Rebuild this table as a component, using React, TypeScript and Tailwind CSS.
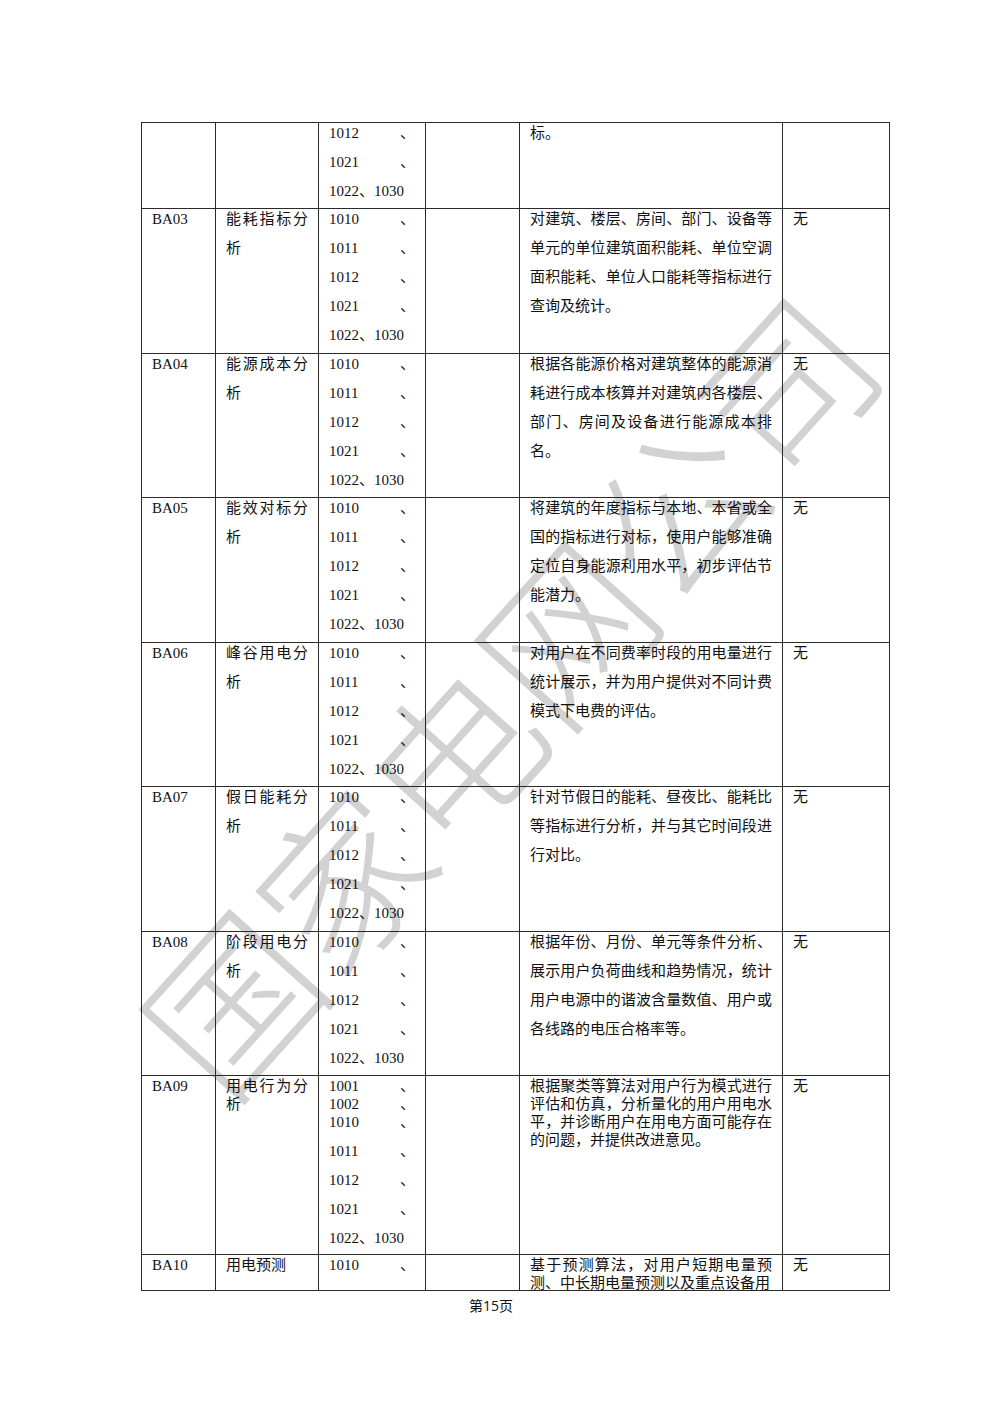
import React from 'react';

type Row = {
  id: string;
  name: string[];
  codes: string[];
  desc: string[];
  note: string;
  height: string;
  // line heights in px for the code column; default 29
  codeLines?: number[];
  tight?: boolean;
};

const C = ['1010、', '1011、', '1012、', '1021、', '1022、1030'];

const rows: Row[] = [
  {
    id: '',
    name: [],
    codes: ['1012、', '1021、', '1022、1030'],
    desc: ['标。'],
    note: '',
    height: 'h-[86px]',
  },
  {
    id: 'BA03',
    name: ['能耗指标分', '析'],
    codes: C,
    desc: ['对建筑、楼层、房间、部门、设备等', '单元的单位建筑面积能耗、单位空调', '面积能耗、单位人口能耗等指标进行', '查询及统计。'],
    note: '无',
    height: 'h-[145px]',
  },
  {
    id: 'BA04',
    name: ['能源成本分', '析'],
    codes: C,
    desc: ['根据各能源价格对建筑整体的能源消', '耗进行成本核算并对建筑内各楼层、', '部门、房间及设备进行能源成本排', '名。'],
    note: '无',
    height: 'h-[144px]',
  },
  {
    id: 'BA05',
    name: ['能效对标分', '析'],
    codes: C,
    desc: ['将建筑的年度指标与本地、本省或全', '国的指标进行对标，使用户能够准确', '定位自身能源利用水平，初步评估节', '能潜力。'],
    note: '无',
    height: 'h-[145px]',
  },
  {
    id: 'BA06',
    name: ['峰谷用电分', '析'],
    codes: C,
    desc: ['对用户在不同费率时段的用电量进行', '统计展示，并为用户提供对不同计费', '模式下电费的评估。'],
    note: '无',
    height: 'h-[144px]',
  },
  {
    id: 'BA07',
    name: ['假日能耗分', '析'],
    codes: C,
    desc: ['针对节假日的能耗、昼夜比、能耗比', '等指标进行分析，并与其它时间段进', '行对比。'],
    note: '无',
    height: 'h-[145px]',
  },
  {
    id: 'BA08',
    name: ['阶段用电分', '析'],
    codes: C,
    desc: ['根据年份、月份、单元等条件分析、', '展示用户负荷曲线和趋势情况，统计', '用户电源中的谐波含量数值、用户或', '各线路的电压合格率等。'],
    note: '无',
    height: 'h-[144px]',
  },
  {
    id: 'BA09',
    name: ['用电行为分', '析'],
    codes: ['1001、', '1002、', '1010、', '1011、', '1012、', '1021、', '1022、1030'],
    codeLines: [18, 18, 29, 29, 29, 29, 29],
    desc: ['根据聚类等算法对用户行为模式进行', '评估和仿真，分析量化的用户用电水', '平，并诊断用户在用电方面可能存在', '的问题，并提供改进意见。'],
    note: '无',
    height: 'h-[179px]',
    tight: true,
  },
  {
    id: 'BA10',
    name: ['用电预测'],
    codes: ['1010、'],
    desc: ['基于预测算法，对用户短期电量预', '测、中长期电量预测以及重点设备用'],
    note: '无',
    height: 'h-[36px]',
    tight: true,
  },
];

const Line = ({ h, justify, children }: { h: number; justify?: boolean; children: React.ReactNode }) => (
  <div
    className={`leading-[20px] whitespace-nowrap ${justify ? 'text-justify [text-align-last:justify]' : ''}`}
    style={{ height: h }}
  >
    {children}
  </div>
);

const CodeLine = ({ text, h }: { text: string; h: number }) => {
  // a single code with trailing 、 is spread to both edges, as Word justifies it
  const single = /^\d{4}、$/.test(text);
  return (
    <div className="leading-[20px] flex justify-between whitespace-nowrap" style={{ height: h }}>
      {single ? (
        <>
          <span>{text.slice(0, 4)}</span>
          <span className="w-[15px]">、</span>
        </>
      ) : (
        <span>{text}</span>
      )}
    </div>
  );
};

const cell = 'border-r border-b border-[#2a2a2a] px-[10px] overflow-hidden';

export default function App() {
  return (
    <div className="relative w-[1000px] h-[1415px] bg-white overflow-hidden text-[#111] [font-family:'Liberation_Serif','Noto_Sans_CJK_SC',serif] text-[15px]">
      {/* watermark */}
      <div className="absolute left-[505px] top-[690px] -translate-x-1/2 -translate-y-1/2 -rotate-[48deg] whitespace-nowrap text-[166px] leading-none font-light text-[#d2d2d2] [font-family:'Noto_Sans_CJK_SC',sans-serif] select-none pointer-events-none">
        国家电网公司
      </div>

      <div className="relative pt-[122px] pl-[141px]">
        <div className="grid grid-cols-[74px_103px_107px_94px_263px_107px] w-[749px] border-l border-t border-[#2a2a2a]">
          {rows.map((r, i) => {
            const lh = r.tight ? 18 : 29;
            return (
              <React.Fragment key={i}>
                <div className={`${cell} ${r.height}`}>
                  {r.id && <Line h={lh}>{r.id}</Line>}
                </div>
                <div className={`${cell} ${r.height}`}>
                  {r.name.map((n, j) => (
                    <Line key={j} h={lh} justify={j < r.name.length - 1}>
                      {n}
                    </Line>
                  ))}
                </div>
                <div className={`${cell} ${r.height}`}>
                  {r.codes.map((c, j) => (
                    <CodeLine key={j} text={c} h={r.codeLines ? r.codeLines[j] : 29} />
                  ))}
                </div>
                <div className={`${cell} ${r.height}`} />
                <div className={`${cell} ${r.height}`}>
                  {r.desc.map((d, j) => (
                    <Line key={j} h={lh} justify={j < r.desc.length - 1}>
                      {d}
                    </Line>
                  ))}
                </div>
                <div className={`${cell} ${r.height}`}>
                  {r.note && <Line h={lh}>{r.note}</Line>}
                </div>
              </React.Fragment>
            );
          })}
        </div>
      </div>

      <div className="relative mt-[5px] w-[1000px] pr-[18px] text-center text-[14px] leading-[20px] [font-family:'Liberation_Serif','Noto_Sans_CJK_SC',serif]">
        第<span className="[font-family:'Open_Sans',sans-serif]">15</span>页
      </div>
    </div>
  );
}
